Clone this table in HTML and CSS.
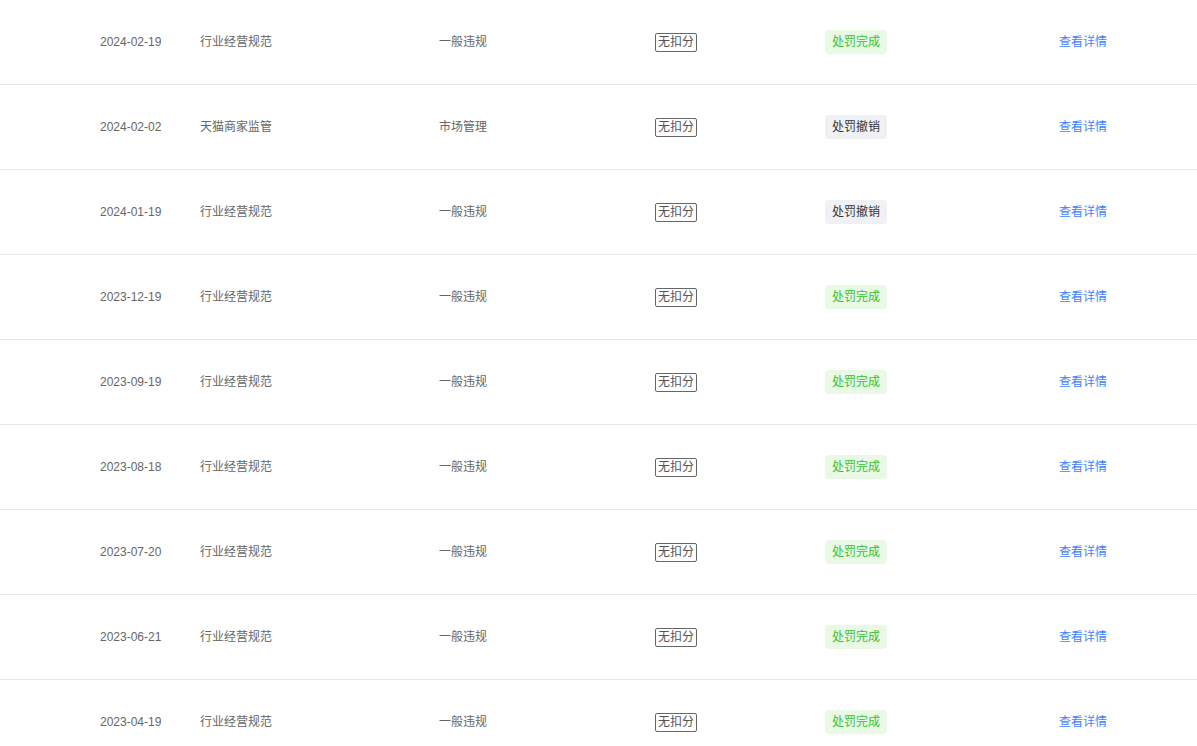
FILE: index.html
```html
<!DOCTYPE html>
<html lang="zh-CN">

<head>
  <meta charset="UTF-8">
  <title>违规记录</title>
  <link rel="stylesheet" href="styles.css">
</head>

<body>
  <div class="record-list">
    <div class="record-row">
      <span class="date">2024-02-19</span>
      <span class="source">行业经营规范</span>
      <span class="kind">一般违规</span>
      <span class="cell"><span class="score-tag">无扣分</span></span>
      <span class="cell"><span class="status done">处罚完成</span></span>
      <span class="cell"><a class="detail-link" href="#">查看详情</a></span>
    </div>
    <div class="record-row">
      <span class="date">2024-02-02</span>
      <span class="source">天猫商家监管</span>
      <span class="kind">市场管理</span>
      <span class="cell"><span class="score-tag">无扣分</span></span>
      <span class="cell"><span class="status revoked">处罚撤销</span></span>
      <span class="cell"><a class="detail-link" href="#">查看详情</a></span>
    </div>
    <div class="record-row">
      <span class="date">2024-01-19</span>
      <span class="source">行业经营规范</span>
      <span class="kind">一般违规</span>
      <span class="cell"><span class="score-tag">无扣分</span></span>
      <span class="cell"><span class="status revoked">处罚撤销</span></span>
      <span class="cell"><a class="detail-link" href="#">查看详情</a></span>
    </div>
    <div class="record-row">
      <span class="date">2023-12-19</span>
      <span class="source">行业经营规范</span>
      <span class="kind">一般违规</span>
      <span class="cell"><span class="score-tag">无扣分</span></span>
      <span class="cell"><span class="status done">处罚完成</span></span>
      <span class="cell"><a class="detail-link" href="#">查看详情</a></span>
    </div>
    <div class="record-row">
      <span class="date">2023-09-19</span>
      <span class="source">行业经营规范</span>
      <span class="kind">一般违规</span>
      <span class="cell"><span class="score-tag">无扣分</span></span>
      <span class="cell"><span class="status done">处罚完成</span></span>
      <span class="cell"><a class="detail-link" href="#">查看详情</a></span>
    </div>
    <div class="record-row">
      <span class="date">2023-08-18</span>
      <span class="source">行业经营规范</span>
      <span class="kind">一般违规</span>
      <span class="cell"><span class="score-tag">无扣分</span></span>
      <span class="cell"><span class="status done">处罚完成</span></span>
      <span class="cell"><a class="detail-link" href="#">查看详情</a></span>
    </div>
    <div class="record-row">
      <span class="date">2023-07-20</span>
      <span class="source">行业经营规范</span>
      <span class="kind">一般违规</span>
      <span class="cell"><span class="score-tag">无扣分</span></span>
      <span class="cell"><span class="status done">处罚完成</span></span>
      <span class="cell"><a class="detail-link" href="#">查看详情</a></span>
    </div>
    <div class="record-row">
      <span class="date">2023-06-21</span>
      <span class="source">行业经营规范</span>
      <span class="kind">一般违规</span>
      <span class="cell"><span class="score-tag">无扣分</span></span>
      <span class="cell"><span class="status done">处罚完成</span></span>
      <span class="cell"><a class="detail-link" href="#">查看详情</a></span>
    </div>
    <div class="record-row">
      <span class="date">2023-04-19</span>
      <span class="source">行业经营规范</span>
      <span class="kind">一般违规</span>
      <span class="cell"><span class="score-tag">无扣分</span></span>
      <span class="cell"><span class="status done">处罚完成</span></span>
      <span class="cell"><a class="detail-link" href="#">查看详情</a></span>
    </div>
  </div>
</body>

</html>
```

FILE: styles.css
```css
body {
  margin: 0;
  padding: 0;
  background-color: #fff;
  font-family: "Liberation Sans", "Noto Sans CJK SC", sans-serif;
  font-size: 12px;
  color: #666;
}

.record-list {
  width: 100%;
}

.record-row {
  display: grid;
  grid-template-columns: 100px 239px 216px 170px 234px 1fr;
  align-items: center;
  height: 84px;
  padding-left: 100px;
  border-bottom: 1px solid #e8e8e8;
}

.date,
.source,
.kind {
  line-height: 16px;
}

.cell {
  display: flex;
  align-items: center;
}

.score-tag {
  display: inline-block;
  border: 1px solid #666;
  border-radius: 2px;
  padding: 0 2px;
  line-height: 17px;
  color: #555;
}

.status {
  display: inline-block;
  padding: 0 7px;
  height: 24px;
  line-height: 24px;
  border-radius: 4px;
}

.status.done {
  background-color: #e9f9e6;
  color: #2fc230;
}

.status.revoked {
  background-color: #f0f1f5;
  color: #333;
}

.detail-link {
  display: block;
  line-height: 16px;
  color: #3d7fff;
  text-decoration: none;
}
```
